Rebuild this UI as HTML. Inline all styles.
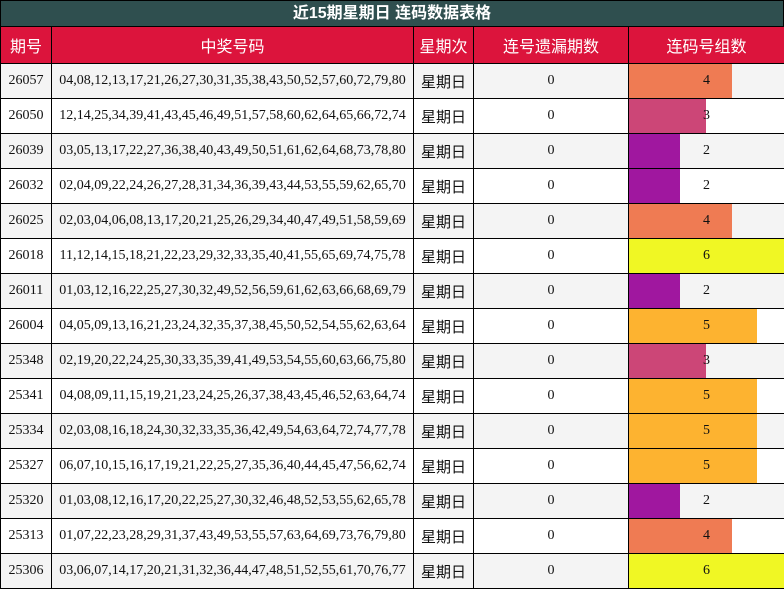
<!DOCTYPE html><html><head><meta charset="utf-8"><style>
body{margin:0;width:784px;height:589px;background:#fff;position:relative;overflow:hidden;font-family:"Liberation Serif","Noto Serif CJK SC",serif}
.t{position:absolute;left:0;top:0;width:782px;height:25px;background:#2f4f4f;border:1px solid #000;color:#fff;font:bold 16px "Liberation Sans","Noto Sans CJK SC",sans-serif;text-align:center;line-height:26px}
table{position:absolute;left:0;top:26px;border-collapse:collapse;table-layout:fixed;width:784px}
td{border:1px solid #000;padding:0;text-align:center;height:34px;font-size:14px;color:#111;white-space:nowrap;overflow:hidden}
tr.h td{background:#dc143c;color:#fff;font:16px "Liberation Sans","Noto Sans CJK SC",sans-serif;height:36px}
tr:nth-child(even) td{background:#f4f4f4}
tr:nth-child(odd):not(.h) td{background:#fff}
td.w{font:15px "Liberation Sans","Noto Sans CJK SC",sans-serif}
td.b{position:relative;border-right:1px solid #f4c0d0}
td.b span{position:absolute;left:0;top:0;bottom:0}
td.b i{position:relative;font-style:normal}
</style></head><body>
<div class="t">近15期星期日 连码数据表格</div>
<table>
<colgroup><col style="width:51px"><col style="width:362px"><col style="width:60px"><col style="width:155px"><col style="width:156px"></colgroup>
<tr class="h"><td>期号</td><td>中奖号码</td><td>星期次</td><td>连号遗漏期数</td><td>连码号组数</td></tr>
<tr><td>26057</td><td>04,08,12,13,17,21,26,27,30,31,35,38,43,50,52,57,60,72,79,80</td><td class="w">星期日</td><td>0</td><td class="b"><span style="width:103px;background:#ef7b53"></span><i>4</i></td></tr>
<tr><td>26050</td><td>12,14,25,34,39,41,43,45,46,49,51,57,58,60,62,64,65,66,72,74</td><td class="w">星期日</td><td>0</td><td class="b"><span style="width:77px;background:#cc4677"></span><i>3</i></td></tr>
<tr><td>26039</td><td>03,05,13,17,22,27,36,38,40,43,49,50,51,61,62,64,68,73,78,80</td><td class="w">星期日</td><td>0</td><td class="b"><span style="width:51px;background:#a0179f"></span><i>2</i></td></tr>
<tr><td>26032</td><td>02,04,09,22,24,26,27,28,31,34,36,39,43,44,53,55,59,62,65,70</td><td class="w">星期日</td><td>0</td><td class="b"><span style="width:51px;background:#a0179f"></span><i>2</i></td></tr>
<tr><td>26025</td><td>02,03,04,06,08,13,17,20,21,25,26,29,34,40,47,49,51,58,59,69</td><td class="w">星期日</td><td>0</td><td class="b"><span style="width:103px;background:#ef7b53"></span><i>4</i></td></tr>
<tr><td>26018</td><td>11,12,14,15,18,21,22,23,29,32,33,35,40,41,55,65,69,74,75,78</td><td class="w">星期日</td><td>0</td><td class="b"><span style="width:155px;background:#f0f724"></span><i>6</i></td></tr>
<tr><td>26011</td><td>01,03,12,16,22,25,27,30,32,49,52,56,59,61,62,63,66,68,69,79</td><td class="w">星期日</td><td>0</td><td class="b"><span style="width:51px;background:#a0179f"></span><i>2</i></td></tr>
<tr><td>26004</td><td>04,05,09,13,16,21,23,24,32,35,37,38,45,50,52,54,55,62,63,64</td><td class="w">星期日</td><td>0</td><td class="b"><span style="width:128px;background:#fdb330"></span><i>5</i></td></tr>
<tr><td>25348</td><td>02,19,20,22,24,25,30,33,35,39,41,49,53,54,55,60,63,66,75,80</td><td class="w">星期日</td><td>0</td><td class="b"><span style="width:77px;background:#cc4677"></span><i>3</i></td></tr>
<tr><td>25341</td><td>04,08,09,11,15,19,21,23,24,25,26,37,38,43,45,46,52,63,64,74</td><td class="w">星期日</td><td>0</td><td class="b"><span style="width:128px;background:#fdb330"></span><i>5</i></td></tr>
<tr><td>25334</td><td>02,03,08,16,18,24,30,32,33,35,36,42,49,54,63,64,72,74,77,78</td><td class="w">星期日</td><td>0</td><td class="b"><span style="width:128px;background:#fdb330"></span><i>5</i></td></tr>
<tr><td>25327</td><td>06,07,10,15,16,17,19,21,22,25,27,35,36,40,44,45,47,56,62,74</td><td class="w">星期日</td><td>0</td><td class="b"><span style="width:128px;background:#fdb330"></span><i>5</i></td></tr>
<tr><td>25320</td><td>01,03,08,12,16,17,20,22,25,27,30,32,46,48,52,53,55,62,65,78</td><td class="w">星期日</td><td>0</td><td class="b"><span style="width:51px;background:#a0179f"></span><i>2</i></td></tr>
<tr><td>25313</td><td>01,07,22,23,28,29,31,37,43,49,53,55,57,63,64,69,73,76,79,80</td><td class="w">星期日</td><td>0</td><td class="b"><span style="width:103px;background:#ef7b53"></span><i>4</i></td></tr>
<tr><td>25306</td><td>03,06,07,14,17,20,21,31,32,36,44,47,48,51,52,55,61,70,76,77</td><td class="w">星期日</td><td>0</td><td class="b"><span style="width:155px;background:#f0f724"></span><i>6</i></td></tr>
</table>
</body></html>
